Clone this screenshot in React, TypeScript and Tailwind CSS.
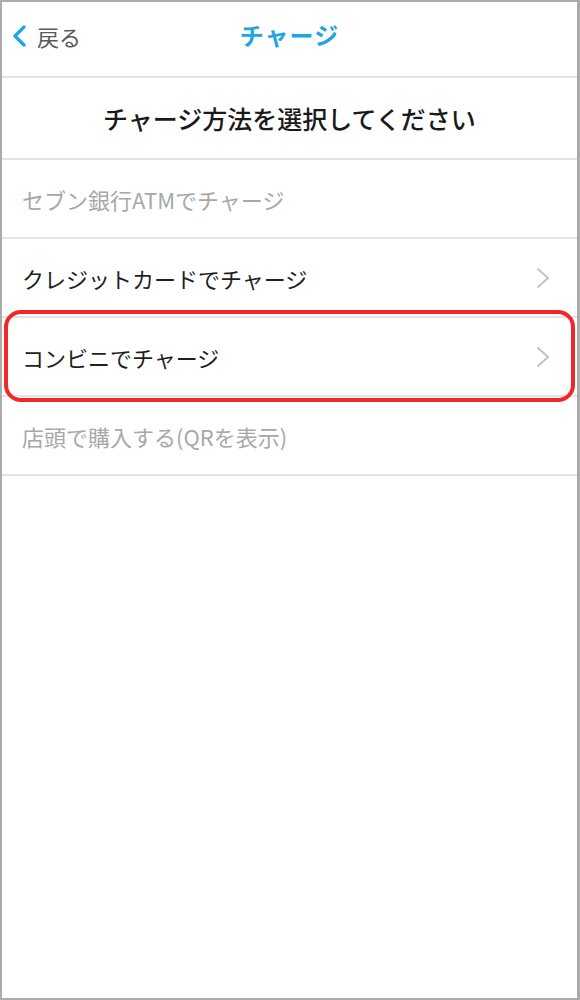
import React from 'react';

const font = { fontFamily: '"Noto Sans CJK JP", "Noto Sans", sans-serif' };

const ChevronRight = () => (
  <svg width="14" height="22" viewBox="0 0 14 22" fill="none">
    <path d="M2 2 L12 11 L2 20" stroke="#c2c2c2" strokeWidth="2" strokeLinecap="round" strokeLinejoin="round" />
  </svg>
);

const rows = [
  { label: 'セブン銀行ATMでチャージ', enabled: false },
  { label: 'クレジットカードでチャージ', enabled: true },
  { label: 'コンビニでチャージ', enabled: true, highlight: true },
  { label: '店頭で購入する(QRを表示)', enabled: false },
];

const App = () => {
  return (
    <div
      className="w-[580px] h-[1000px] bg-white border-l-2 border-r-[3px] border-y-2 border-[#ababab] flex flex-col"
      style={font}
    >
      {/* Header */}
      <div className="relative h-[76px] flex items-center border-b-2 border-[#e3e3e3] shrink-0">
        <div className="flex items-center pl-[10px] gap-[9px] -mt-[6px]">
          <svg width="16" height="22" viewBox="0 0 16 22" fill="none">
            <path d="M12 2 L3 11 L12 20" stroke="#1ea6e2" strokeWidth="3.2" strokeLinecap="round" strokeLinejoin="round" />
          </svg>
          <span className="text-[22px] leading-none text-[#5a5a5a]">戻る</span>
        </div>
        <div className="absolute inset-x-0 top-0 h-full flex items-center justify-center -mt-[4px] pointer-events-none">
          <span className="text-[24px] font-bold leading-none text-[#1ea6e2] tracking-[1px]">チャージ</span>
        </div>
      </div>

      {/* Section title */}
      <div className="h-[82px] flex items-center justify-center border-b-2 border-[#e3e3e3] shrink-0">
        <span className="text-[25px] font-medium leading-none text-[#1a1a1a]">チャージ方法を選択してください</span>
      </div>

      {/* Options */}
      <div className="relative">
        {rows.map((row) => (
          <div
            key={row.label}
            className="h-[79px] flex items-center justify-between pl-[20px] pr-[27px] border-b-2 border-[#e3e3e3]"
          >
            <span className={`text-[22px] leading-none ${row.enabled ? 'text-[#1f1f1f]' : 'text-[#a8a8a8]'}`}>
              {row.label}
            </span>
            {row.enabled && <ChevronRight />}
          </div>
        ))}
        {/* Red highlight annotation */}
        <div className="absolute left-[2px] right-[2px] top-[150px] h-[92px] border-[4px] border-[#f02828] rounded-[17px] pointer-events-none" />
      </div>
    </div>
  );
};

export default App;
